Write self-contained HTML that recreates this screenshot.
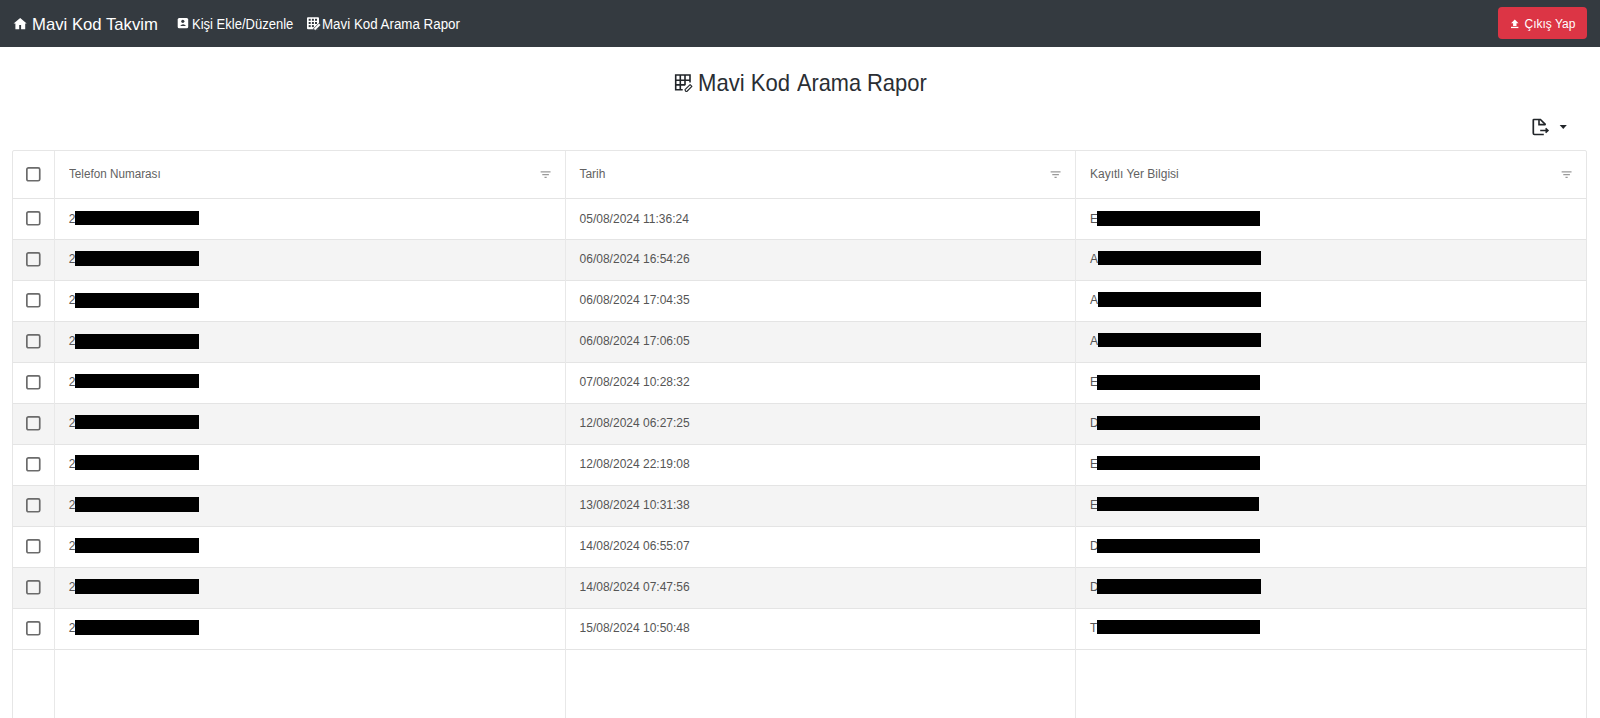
<!DOCTYPE html>
<html><head><meta charset="utf-8">
<style>
html,body{margin:0;padding:0;width:1600px;height:718px;overflow:hidden;background:#fff;font-family:"Liberation Sans",sans-serif;}
.a{position:absolute;white-space:nowrap;}
#nav{position:absolute;left:0;top:0;width:1600px;height:46.8px;background:#343a40;}
.t{position:absolute;white-space:nowrap;line-height:1;transform-origin:0 0;}
.btn{position:absolute;left:1498.2px;top:7px;width:88.5px;height:32px;background:#dc3545;border-radius:4px;}
#grid{position:absolute;left:12px;top:150px;width:1575px;height:600px;border:1px solid #e6e6e6;box-sizing:border-box;border-radius:2px;}
.vl{position:absolute;top:151px;width:1px;height:567px;background:#e8e8e8;}
.hl{position:absolute;left:13px;width:1573px;height:1px;background:#e4e4e4;}
.row{position:absolute;left:13px;width:1573px;height:40px;}
.g{background:#f4f4f4;}
.cb{position:absolute;left:26px;width:15px;height:15px;box-sizing:border-box;border:2px solid #6e6e6e;border-radius:2px;}
.hd{font-size:12px;color:#626262;}
.dt{font-size:12px;color:#555;}
.bar{position:absolute;background:#000;}
</style></head><body>
<div id="nav">
  <svg class="a" style="left:0;top:0" width="340" height="46">
    <!-- house -->
    <path d="M13.6 23.6 L20.2 17.9 L26.7 23.6 L25.2 23.6 L25.2 29.2 L21.1 29.2 L21.1 25.1 L19.2 25.1 L19.2 29.2 L15.4 29.2 L15.4 23.6 Z" fill="#fff"/>
    <!-- person card -->
    <rect x="177.7" y="18" width="10.5" height="10.2" rx="1.5" fill="#fff"/>
    <circle cx="182.8" cy="21.3" r="1.6" fill="#343a40"/>
    <path d="M180.1 26.1 Q183.1 22.4 186.1 26.1 Z" fill="#343a40"/>
    <!-- grid icon -->
    <rect x="307" y="17.2" width="12" height="12" rx="1" fill="#fff"/>
    <g fill="#343a40">
      <rect x="308.7" y="18.8" width="2" height="2"/><rect x="311.9" y="18.8" width="2" height="2"/><rect x="315" y="18.8" width="2" height="2"/>
      <rect x="308.7" y="22" width="2" height="2"/><rect x="311.9" y="22" width="2" height="2"/><rect x="315" y="22" width="2" height="2"/>
      <rect x="308.7" y="25.1" width="2" height="2"/><rect x="311.9" y="25.1" width="2" height="2"/>
      <path d="M313.2 28.6 L319.6 22.2 L321 23.6 L321 29.6 L313.2 29.6 Z"/>
    </g>
    <path d="M314.6 29.3 L315.4 29.8 L320.2 25 L319 23.8 L314.2 28.6 Z" fill="#fff" stroke="#fff" stroke-width="0.6" stroke-linejoin="round"/>
  </svg>
  <div class="t" style="left:32.2px;top:15.7px;font-size:17px;color:#fff;transform:scaleX(0.982)">Mavi Kod Takvim</div>
  <div class="t" style="left:192.2px;top:16.9px;font-size:14px;color:#fff;transform:scaleX(0.930)">Kişi Ekle/Düzenle</div>
  <div class="t" style="left:322.2px;top:16.9px;font-size:14px;color:#fff;transform:scaleX(0.953)">Mavi Kod Arama Rapor</div>
  <div class="btn"></div>
  <svg class="a" style="left:1505px;top:15px" width="20" height="16">
    <path d="M9.8 4.5 L13.5 8.3 L11.5 8.3 L11.5 11 L8.1 11 L8.1 8.3 L6.1 8.3 Z" fill="#fff"/>
    <rect x="6" y="11.8" width="7.4" height="1.3" fill="#fff"/>
  </svg>
  <div class="t" style="left:1524.5px;top:17.7px;font-size:12px;color:#fff;">Çıkış Yap</div>
</div>

<!-- title -->
<svg class="a" style="left:670px;top:70px" width="26" height="26">
  <g fill="none" stroke="#212529" stroke-width="1.6">
    <path d="M20 12.5 L20 5 L5.7 5 L5.7 19.7 L12.7 19.7"/>
    <path d="M10.3 5 L10.3 19.7 M15 5 L15 15.2 M5.7 10.3 L20 10.3 M5.7 14.9 L15 14.9"/>
  </g>
  <path d="M15.6 21.2 L16.8 21.5 L21.9 16.4 L20.1 14.6 L15 19.7 Z" fill="none" stroke="#212529" stroke-width="1.1" stroke-linejoin="round"/>
</svg>
<div class="t" style="left:698.2px;top:70.9px;font-size:24px;color:#2a2e33;transform:scaleX(0.920)">Mavi Kod</div>
<div class="t" style="left:796.9px;top:70.9px;font-size:24px;color:#2a2e33;transform:scaleX(0.906)">Arama</div>
<div class="t" style="left:867.3px;top:70.9px;font-size:24px;color:#2a2e33;transform:scaleX(0.915)">Rapor</div>

<!-- export icon -->
<svg class="a" style="left:1525px;top:110px" width="50" height="30">
  <path d="M18.8 24.5 L9.5 24.5 Q8.3 24.5 8.3 23.3 L8.3 10.1 Q8.3 9.5 8.9 9.5 L15.4 9.5 L20 14.2 L20 15" fill="none" stroke="#212529" stroke-width="1.7"/>
  <path d="M14 9.5 L14 14.6 L20.5 14.6" fill="none" stroke="#212529" stroke-width="1.6"/>
  <path d="M15.2 20.5 L22.8 20.5 M20.6 18.4 L22.9 20.5 L20.6 22.6" fill="none" stroke="#212529" stroke-width="1.6"/>
  <path d="M34.7 15 L41.8 15 L38.25 19 Z" fill="#212529"/>
</svg>

<!-- grid -->
<div class="row g" style="top:240px"></div>
<div class="row g" style="top:322px"></div>
<div class="row g" style="top:404px"></div>
<div class="row g" style="top:486px"></div>
<div class="row g" style="top:568px"></div>
<div id="grid"></div>
<div class="hl" style="top:198px"></div>
<div class="hl" style="top:239px"></div>
<div class="hl" style="top:280px"></div>
<div class="hl" style="top:321px"></div>
<div class="hl" style="top:362px"></div>
<div class="hl" style="top:403px"></div>
<div class="hl" style="top:444px"></div>
<div class="hl" style="top:485px"></div>
<div class="hl" style="top:526px"></div>
<div class="hl" style="top:567px"></div>
<div class="hl" style="top:608px"></div>
<div class="hl" style="top:649px"></div>
<div class="vl" style="left:54px"></div>
<div class="vl" style="left:565px"></div>
<div class="vl" style="left:1075px"></div>
<svg class="a" style="left:26.1px;top:167.2px" width="16" height="16"><rect x="0.85" y="0.85" width="12.9" height="12.9" rx="1.6" fill="none" stroke="#6b6b6b" stroke-width="1.7"/></svg>
<div class="t hd" style="left:69px;top:167.7px;transform:scaleX(0.975)">Telefon Numarası</div>
<div class="t hd" style="left:579.4px;top:167.7px">Tarih</div>
<div class="t hd" style="left:1090px;top:167.7px">Kayıtlı Yer Bilgisi</div>
<svg class="a" style="left:538.6px;top:167.6px" width="13.2" height="13.2" viewBox="0 0 24 24"><path d="M10 18h4v-2h-4v2zM3 6v2h18V6H3zm3 7h12v-2H6v2z" fill="#9a9a9a"/></svg>
<svg class="a" style="left:1049.4px;top:167.6px" width="13.2" height="13.2" viewBox="0 0 24 24"><path d="M10 18h4v-2h-4v2zM3 6v2h18V6H3zm3 7h12v-2H6v2z" fill="#9a9a9a"/></svg>
<svg class="a" style="left:1560.4px;top:167.6px" width="13.2" height="13.2" viewBox="0 0 24 24"><path d="M10 18h4v-2h-4v2zM3 6v2h18V6H3zm3 7h12v-2H6v2z" fill="#9a9a9a"/></svg>
<svg class="a" style="left:26.1px;top:211.2px" width="16" height="16"><rect x="0.85" y="0.85" width="12.9" height="12.9" rx="1.6" fill="none" stroke="#6b6b6b" stroke-width="1.7"/></svg>
<div class="t dt" style="left:68.8px;top:212.54px">2</div>
<div class="bar" style="left:75px;top:211px;width:124px;height:14px"></div>
<div class="t dt" style="left:579.6px;top:212.54px">05/08/2024 11:36:24</div>
<div class="t dt" style="left:1090px;top:212.54px">E</div>
<div class="bar" style="left:1097px;top:210.8px;width:163px;height:14.8px"></div>
<svg class="a" style="left:26.1px;top:252.2px" width="16" height="16"><rect x="0.85" y="0.85" width="12.9" height="12.9" rx="1.6" fill="none" stroke="#6b6b6b" stroke-width="1.7"/></svg>
<div class="t dt" style="left:68.8px;top:253.47px">2</div>
<div class="bar" style="left:75px;top:251px;width:124px;height:14.5px"></div>
<div class="t dt" style="left:579.6px;top:253.47px">06/08/2024 16:54:26</div>
<div class="t dt" style="left:1090px;top:253.47px">A</div>
<div class="bar" style="left:1098px;top:250.6px;width:163px;height:14.7px"></div>
<svg class="a" style="left:26.1px;top:293.2px" width="16" height="16"><rect x="0.85" y="0.85" width="12.9" height="12.9" rx="1.6" fill="none" stroke="#6b6b6b" stroke-width="1.7"/></svg>
<div class="t dt" style="left:68.8px;top:294.40px">2</div>
<div class="bar" style="left:75px;top:293px;width:124px;height:14.6px"></div>
<div class="t dt" style="left:579.6px;top:294.40px">06/08/2024 17:04:35</div>
<div class="t dt" style="left:1090px;top:294.40px">A</div>
<div class="bar" style="left:1098px;top:292px;width:163px;height:15px"></div>
<svg class="a" style="left:26.1px;top:334.2px" width="16" height="16"><rect x="0.85" y="0.85" width="12.9" height="12.9" rx="1.6" fill="none" stroke="#6b6b6b" stroke-width="1.7"/></svg>
<div class="t dt" style="left:68.8px;top:335.33px">2</div>
<div class="bar" style="left:75px;top:334px;width:124px;height:14.7px"></div>
<div class="t dt" style="left:579.6px;top:335.33px">06/08/2024 17:06:05</div>
<div class="t dt" style="left:1090px;top:335.33px">A</div>
<div class="bar" style="left:1098px;top:332.8px;width:163px;height:14.7px"></div>
<svg class="a" style="left:26.1px;top:375.2px" width="16" height="16"><rect x="0.85" y="0.85" width="12.9" height="12.9" rx="1.6" fill="none" stroke="#6b6b6b" stroke-width="1.7"/></svg>
<div class="t dt" style="left:68.8px;top:376.26px">2</div>
<div class="bar" style="left:75px;top:374px;width:124px;height:14px"></div>
<div class="t dt" style="left:579.6px;top:376.26px">07/08/2024 10:28:32</div>
<div class="t dt" style="left:1090px;top:376.26px">E</div>
<div class="bar" style="left:1097px;top:374.6px;width:163px;height:15px"></div>
<svg class="a" style="left:26.1px;top:416.2px" width="16" height="16"><rect x="0.85" y="0.85" width="12.9" height="12.9" rx="1.6" fill="none" stroke="#6b6b6b" stroke-width="1.7"/></svg>
<div class="t dt" style="left:68.8px;top:417.19px">2</div>
<div class="bar" style="left:75px;top:414.8px;width:124px;height:14.6px"></div>
<div class="t dt" style="left:579.6px;top:417.19px">12/08/2024 06:27:25</div>
<div class="t dt" style="left:1090px;top:417.19px">D</div>
<div class="bar" style="left:1097.4px;top:415.6px;width:163.0px;height:14px"></div>
<svg class="a" style="left:26.1px;top:457.2px" width="16" height="16"><rect x="0.85" y="0.85" width="12.9" height="12.9" rx="1.6" fill="none" stroke="#6b6b6b" stroke-width="1.7"/></svg>
<div class="t dt" style="left:68.8px;top:458.12px">2</div>
<div class="bar" style="left:75px;top:455px;width:124px;height:14.6px"></div>
<div class="t dt" style="left:579.6px;top:458.12px">12/08/2024 22:19:08</div>
<div class="t dt" style="left:1090px;top:458.12px">E</div>
<div class="bar" style="left:1097.4px;top:455.6px;width:163.0px;height:14.6px"></div>
<svg class="a" style="left:26.1px;top:498.2px" width="16" height="16"><rect x="0.85" y="0.85" width="12.9" height="12.9" rx="1.6" fill="none" stroke="#6b6b6b" stroke-width="1.7"/></svg>
<div class="t dt" style="left:68.8px;top:499.05px">2</div>
<div class="bar" style="left:75px;top:497px;width:124px;height:15px"></div>
<div class="t dt" style="left:579.6px;top:499.05px">13/08/2024 10:31:38</div>
<div class="t dt" style="left:1090px;top:499.05px">E</div>
<div class="bar" style="left:1096.8px;top:496.8px;width:162.5px;height:14.6px"></div>
<svg class="a" style="left:26.1px;top:539.2px" width="16" height="16"><rect x="0.85" y="0.85" width="12.9" height="12.9" rx="1.6" fill="none" stroke="#6b6b6b" stroke-width="1.7"/></svg>
<div class="t dt" style="left:68.8px;top:539.98px">2</div>
<div class="bar" style="left:75px;top:538px;width:124px;height:14.6px"></div>
<div class="t dt" style="left:579.6px;top:539.98px">14/08/2024 06:55:07</div>
<div class="t dt" style="left:1090px;top:539.98px">D</div>
<div class="bar" style="left:1097.4px;top:538.5px;width:163.0px;height:14.7px"></div>
<svg class="a" style="left:26.1px;top:580.2px" width="16" height="16"><rect x="0.85" y="0.85" width="12.9" height="12.9" rx="1.6" fill="none" stroke="#6b6b6b" stroke-width="1.7"/></svg>
<div class="t dt" style="left:68.8px;top:580.91px">2</div>
<div class="bar" style="left:75px;top:579px;width:124px;height:14.8px"></div>
<div class="t dt" style="left:579.6px;top:580.91px">14/08/2024 07:47:56</div>
<div class="t dt" style="left:1090px;top:580.91px">D</div>
<div class="bar" style="left:1097.4px;top:579.3px;width:163.5999999999999px;height:14.6px"></div>
<svg class="a" style="left:26.1px;top:621.2px" width="16" height="16"><rect x="0.85" y="0.85" width="12.9" height="12.9" rx="1.6" fill="none" stroke="#6b6b6b" stroke-width="1.7"/></svg>
<div class="t dt" style="left:68.8px;top:621.84px">2</div>
<div class="bar" style="left:75px;top:620px;width:124px;height:14.5px"></div>
<div class="t dt" style="left:579.6px;top:621.84px">15/08/2024 10:50:48</div>
<div class="t dt" style="left:1090px;top:621.84px">T</div>
<div class="bar" style="left:1097.4px;top:620px;width:163.0px;height:14.3px"></div>
</body></html>
